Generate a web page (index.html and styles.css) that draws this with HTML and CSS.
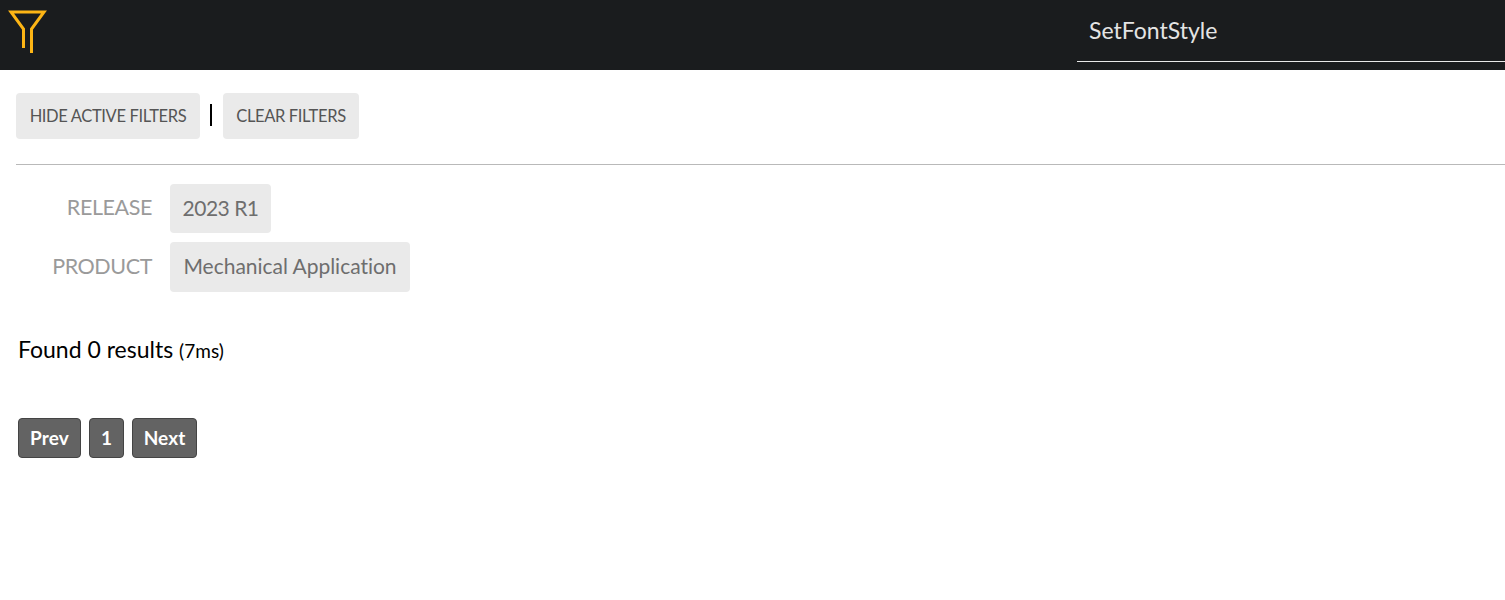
FILE: index.html
```html
<!DOCTYPE html>
<html lang="en">
<head>
    <meta charset="UTF-8">
    <meta name="viewport" content="width=device-width, initial-scale=1.0">
    <title>Search</title>
    <link rel="stylesheet" href="styles.css">
</head>
<body>
    <header class="topbar">
        <svg class="logo" width="40" height="44" viewBox="0 0 40 44">
            <path d="M23.5 43 V19 L36 2 H3 L15.5 19 V38" fill="none" stroke="#fdb515" stroke-width="3"/>
        </svg>
        <input class="search" type="text" value="SetFontStyle">
    </header>

    <main class="content">
        <div class="actions">
            <button class="action-btn action-btn-first">HIDE ACTIVE FILTERS</button>
            <span class="divider"></span>
            <button class="action-btn action-btn-second">CLEAR FILTERS</button>
        </div>
        <hr class="rule">

        <div class="filters">
            <div class="filter-row">
                <span class="filter-label">RELEASE</span>
                <span class="chip chip-release">2023 R1</span>
            </div>
            <div class="filter-row">
                <span class="filter-label">PRODUCT</span>
                <span class="chip chip-product">Mechanical Application</span>
            </div>
        </div>

        <p class="found">Found 0 results <small>(7ms)</small></p>

        <nav class="pager">
            <button class="page-btn page-prev">Prev</button>
            <button class="page-btn page-num">1</button>
            <button class="page-btn page-next">Next</button>
        </nav>
    </main>
</body>
</html>
```

FILE: styles.css
```css
body {
    margin: 0;
    background: #fff;
    font-family: "Lato", "Open Sans", sans-serif;
}

.topbar {
    display: flex;
    justify-content: space-between;
    height: 70px;
    background-color: #1a1c1e;
}

.logo {
    margin: 10px 0 0 8px;
}

.search {
    box-sizing: border-box;
    width: 428px;
    height: 62px;
    padding: 0 12px 2px;
    border: none;
    border-bottom: 1px solid #e8e8e8;
    background: transparent;
    color: #e4e4e4;
    font-family: inherit;
    font-size: 23px;
    outline: none;
}

.content {
    padding: 23px 0 0 16px;
}

.actions {
    display: flex;
    align-items: center;
}

.action-btn {
    height: 46px;
    padding: 0;
    border: none;
    border-radius: 4px;
    background-color: #eaeaea;
    color: #555;
    font-family: inherit;
    font-size: 16.5px;
    letter-spacing: -0.36px;
}

.action-btn-first {
    width: 184px;
}

.action-btn-second {
    width: 136px;
}

.divider {
    width: 2px;
    height: 22px;
    margin: 0 11px 0 10px;
    background-color: #000;
    position: relative;
    top: -1px;
}

.rule {
    height: 1px;
    margin: 25px 0 19px;
    border: none;
    background-color: #b9b9b9;
}

.filters {
    display: flex;
    flex-direction: column;
    gap: 9px;
}

.filter-row {
    display: flex;
    align-items: center;
}

.filter-label {
    width: 136px;
    margin-right: 18px;
    padding-bottom: 3px;
    text-align: right;
    color: #9a9a9a;
    font-size: 21.5px;
    letter-spacing: -0.4px;
}

.chip {
    box-sizing: border-box;
    display: flex;
    align-items: center;
    justify-content: center;
    padding-bottom: 3px;
    border-radius: 4px;
    background-color: #eaeaea;
    color: #6e6e6e;
    font-size: 21px;
}

.chip-release {
    width: 101px;
    height: 49px;
    letter-spacing: -0.5px;
}

.chip-product {
    width: 240px;
    height: 50px;
    letter-spacing: -0.02px;
}

.found {
    margin: 43px 0 0 2px;
    color: #000;
    font-size: 23px;
    line-height: 28px;
}

.found small {
    font-size: 19px;
    letter-spacing: 0.05px;
}

.pager {
    display: flex;
    gap: 8px;
    margin: 53px 0 0 2px;
}

.page-btn {
    height: 40px;
    padding: 0 0 2px;
    border: 1px solid #444;
    border-radius: 4px;
    background-color: #636363;
    color: #fff;
    font-family: inherit;
    font-size: 19px;
    font-weight: 700;
    letter-spacing: 0.1px;
}

.page-prev {
    width: 63px;
}

.page-num {
    width: 35px;
}

.page-next {
    width: 65px;
}
```
